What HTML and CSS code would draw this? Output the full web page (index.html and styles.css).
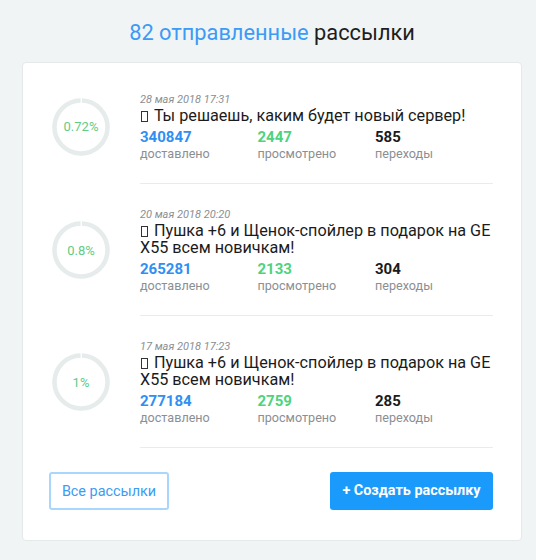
FILE: index.html
```html
<!DOCTYPE html>
<html lang="ru">
<head>
<meta charset="utf-8">
<link rel="stylesheet" href="styles.css">
</head>
<body>
<h1 class="page-title"><span class="accent">82 отправленные</span> рассылки</h1>
<div class="card">
  <div class="row">
    <div class="ring">
      <svg width="58" height="58" viewBox="0 0 58 58"><circle cx="29" cy="29" r="26.5" fill="none" stroke="#e6ebeb" stroke-width="4.5" stroke-dasharray="164 2.5" transform="rotate(-88 29 29)"/></svg>
      <span class="pct">0.72%</span>
    </div>
    <div class="info">
      <div class="date">28 мая 2018 17:31</div>
      <div class="subject"><i class="box"></i>Ты решаешь, каким будет новый сервер!</div>
      <div class="stats">
        <div class="stat"><b class="blue">340847</b><span>доставлено</span></div>
        <div class="stat"><b class="green">2447</b><span>просмотрено</span></div>
        <div class="stat"><b class="dark">585</b><span>переходы</span></div>
      </div>
    </div>
  </div>
  <div class="row">
    <div class="ring">
      <svg width="58" height="58" viewBox="0 0 58 58"><circle cx="29" cy="29" r="26.5" fill="none" stroke="#e6ebeb" stroke-width="4.5" stroke-dasharray="164 2.5" transform="rotate(-88 29 29)"/></svg>
      <span class="pct">0.8%</span>
    </div>
    <div class="info">
      <div class="date">20 мая 2018 20:20</div>
      <div class="subject"><i class="box"></i>Пушка +6 и Щенок-спойлер в подарок на GE X55 всем новичкам!</div>
      <div class="stats">
        <div class="stat"><b class="blue">265281</b><span>доставлено</span></div>
        <div class="stat"><b class="green">2133</b><span>просмотрено</span></div>
        <div class="stat"><b class="dark">304</b><span>переходы</span></div>
      </div>
    </div>
  </div>
  <div class="row">
    <div class="ring">
      <svg width="58" height="58" viewBox="0 0 58 58"><circle cx="29" cy="29" r="26.5" fill="none" stroke="#e6ebeb" stroke-width="4.5" stroke-dasharray="164 2.5" transform="rotate(-88 29 29)"/></svg>
      <span class="pct">1%</span>
    </div>
    <div class="info">
      <div class="date">17 мая 2018 17:23</div>
      <div class="subject"><i class="box"></i>Пушка +6 и Щенок-спойлер в подарок на GE X55 всем новичкам!</div>
      <div class="stats">
        <div class="stat"><b class="blue">277184</b><span>доставлено</span></div>
        <div class="stat"><b class="green">2759</b><span>просмотрено</span></div>
        <div class="stat"><b class="dark">285</b><span>переходы</span></div>
      </div>
    </div>
  </div>
  <div class="actions">
    <button class="btn-outline">Все рассылки</button>
    <button class="btn-primary">+ Создать рассылку</button>
  </div>
</div>
</body>
</html>
```

FILE: styles.css
```css
* { box-sizing: border-box; }
html, body { margin: 0; padding: 0; }
body {
  background: #f0f4f5;
  font-family: Roboto, "Noto Sans", sans-serif;
  color: #222;
  padding: 0 14px 0 22px;
}
.page-title {
  margin: 0;
  padding: 19px 0 0;
  height: 62px;
  font-size: 21.8px;
  font-weight: 400;
  text-align: center;
  color: #1e1e1e;
  line-height: 28px;
}
.accent { color: #3b9bf5; }
.card {
  width: 500px;
  background: #fff;
  border: 1px solid #e4e9ea;
  border-radius: 4px;
  padding: 6px 28px 0 28px;
}
.row {
  display: flex;
  align-items: center;
}
.ring {
  position: relative;
  width: 58px;
  height: 58px;
  flex: none;
  margin: 0 30px 0 1px;
}
.ring svg { display: block; }
.pct {
  position: absolute;
  inset: 0;
  display: flex;
  align-items: center;
  justify-content: center;
  font-size: 13px;
  color: #5fcc85;
}
.info {
  flex: 1;
  border-bottom: 1px solid #e8ecec;
  padding: 24px 0 22px;
}
.date {
  font-size: 11px;
  font-style: italic;
  color: #8a8f93;
  line-height: 13px;
}
.subject {
  font-size: 16.2px;
  line-height: 17px;
  margin-top: 1px;
  color: #1b1b1b;
}
.box {
  display: inline-block;
  width: 7px;
  height: 11px;
  border: 1px solid #333;
  margin: 0 6px 0 1px;
  vertical-align: -1px;
}
.stats {
  display: flex;
  margin-top: 5px;
}
.stat {
  width: 117.5px;
  display: flex;
  flex-direction: column;
}
.stat b {
  font-size: 15px;
  font-weight: 700;
  line-height: 17px;
}
.stat span {
  font-size: 12.6px;
  line-height: 15px;
  color: #8a8f93;
}
.blue { color: #2f8ff2; }
.green { color: #4ed37c; }
.dark { color: #1b1b1b; }
.actions {
  display: flex;
  justify-content: space-between;
  align-items: center;
  padding: 24px 0 30px;
}
.btn-outline {
  width: 120px;
  height: 38px;
  margin-left: -2px;
  border: 2px solid #a9d6fc;
  border-radius: 3px;
  background: #fff;
  color: #3b9bf5;
  font-family: Roboto, sans-serif;
  font-size: 14.4px;
}
.btn-primary {
  width: 163px;
  height: 38px;
  border: none;
  border-radius: 3px;
  background: #1a9bfc;
  color: #fff;
  font-family: Roboto, sans-serif;
  font-size: 14.4px;
  font-weight: 700;
  margin-top: -1px;
}
```
